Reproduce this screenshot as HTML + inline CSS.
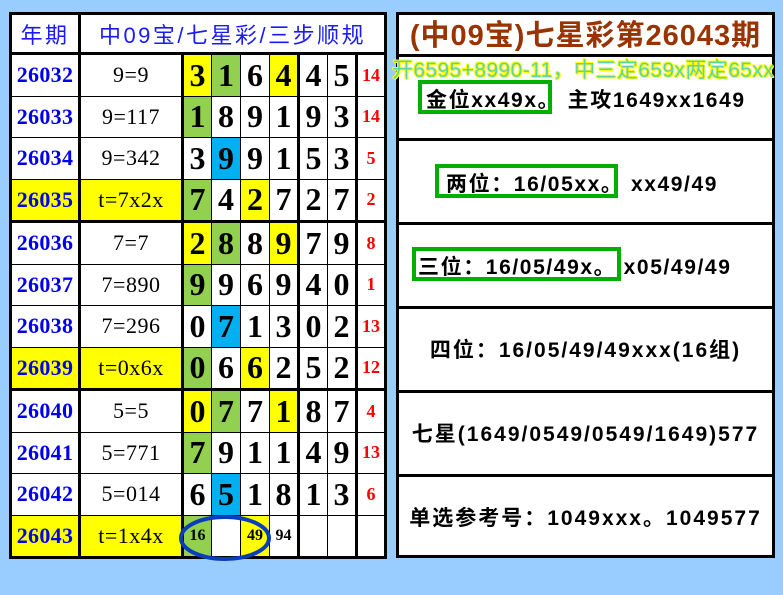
<!DOCTYPE html>
<html><head><meta charset="utf-8"><style>
body{margin:0;width:783px;height:595px;background:#99ccff;position:relative;overflow:hidden}
table{position:absolute;left:9px;top:12px;border-collapse:collapse;background:#fff;table-layout:fixed;width:376px}
td{border:1px solid #000;padding:0;height:40.5px;text-align:center;vertical-align:middle;font-family:"Liberation Serif","Noto Serif CJK SC",serif;overflow:hidden;white-space:nowrap}
.h td{height:37px;border:3px solid #000;font-family:"Liberation Sans","Noto Sans CJK SC",sans-serif;color:#1a1aff;font-size:22px;letter-spacing:2.5px}
td.p{color:#0000ee;font-weight:bold;font-size:22px;letter-spacing:0.3px;border-left:3px solid #000;border-right:3px solid #000}
td.f{font-size:22px;letter-spacing:0.5px}
td.d{font-weight:bold;font-size:32px}
td.r{color:#ff0000;font-weight:bold;font-size:18px;border-left:3px solid #000;border-right:3px solid #000}
td.t{border-left:3px solid #000}
tr.tk td{border-bottom:3px solid #000}
.Y{background:#ffff00}.G{background:#92d050}.B{background:#00b0f0}
#rp{position:absolute;left:396px;top:12px;width:373px;height:540px;border:3px solid #000;background:#fff}
.rb{position:absolute;left:0;width:373px;border-top:3px solid #000;font-family:"Liberation Sans","Noto Sans CJK SC",sans-serif;font-weight:bold;font-size:21px;letter-spacing:2px;color:#000;white-space:nowrap}
.gb{position:absolute;border:4px solid #00b000}
.tx{position:absolute;font-family:'Liberation Sans','Noto Sans CJK SC',sans-serif;font-weight:bold;font-size:21px;letter-spacing:1.6px;white-space:nowrap}
</style></head><body>
<table>
<colgroup><col style="width:69px"><col style="width:103px"><col style="width:29px"><col style="width:29px"><col style="width:29px"><col style="width:29px"><col style="width:29px"><col style="width:29px"><col style="width:29px"></colgroup>
<tr class="h"><td>年期</td><td colspan="8">中09宝/七星彩/三步顺规</td></tr>
<tr><td class="p">26032</td><td class="f">9=9</td><td class="d t Y">3</td><td class="d G">1</td><td class="d">6</td><td class="d Y">4</td><td class="d t">4</td><td class="d">5</td><td class="r">14</td></tr>
<tr><td class="p">26033</td><td class="f">9=117</td><td class="d t G">1</td><td class="d">8</td><td class="d">9</td><td class="d">1</td><td class="d t">9</td><td class="d">3</td><td class="r">14</td></tr>
<tr><td class="p">26034</td><td class="f">9=342</td><td class="d t">3</td><td class="d B">9</td><td class="d">9</td><td class="d">1</td><td class="d t">5</td><td class="d">3</td><td class="r">5</td></tr>
<tr class="tk"><td class="p Y">26035</td><td class="f Y">t=7x2x</td><td class="d t G">7</td><td class="d">4</td><td class="d Y">2</td><td class="d">7</td><td class="d t">2</td><td class="d">7</td><td class="r">2</td></tr>
<tr><td class="p">26036</td><td class="f">7=7</td><td class="d t Y">2</td><td class="d G">8</td><td class="d">8</td><td class="d Y">9</td><td class="d t">7</td><td class="d">9</td><td class="r">8</td></tr>
<tr><td class="p">26037</td><td class="f">7=890</td><td class="d t G">9</td><td class="d">9</td><td class="d">6</td><td class="d">9</td><td class="d t">4</td><td class="d">0</td><td class="r">1</td></tr>
<tr><td class="p">26038</td><td class="f">7=296</td><td class="d t">0</td><td class="d B">7</td><td class="d">1</td><td class="d">3</td><td class="d t">0</td><td class="d">2</td><td class="r">13</td></tr>
<tr class="tk"><td class="p Y">26039</td><td class="f Y">t=0x6x</td><td class="d t G">0</td><td class="d">6</td><td class="d Y">6</td><td class="d">2</td><td class="d t">5</td><td class="d">2</td><td class="r">12</td></tr>
<tr><td class="p">26040</td><td class="f">5=5</td><td class="d t Y">0</td><td class="d G">7</td><td class="d">7</td><td class="d Y">1</td><td class="d t">8</td><td class="d">7</td><td class="r">4</td></tr>
<tr><td class="p">26041</td><td class="f">5=771</td><td class="d t G">7</td><td class="d">9</td><td class="d">1</td><td class="d">1</td><td class="d t">4</td><td class="d">9</td><td class="r">13</td></tr>
<tr><td class="p">26042</td><td class="f">5=014</td><td class="d t">6</td><td class="d B">5</td><td class="d">1</td><td class="d">8</td><td class="d t">1</td><td class="d">3</td><td class="r">6</td></tr>
<tr class="tk"><td class="p Y">26043</td><td class="f Y">t=1x4x</td><td class="t G" style="font-weight:bold;font-size:16px">16</td><td></td><td class="Y" style="font-weight:bold;font-size:16px">49</td><td style="font-weight:bold;font-size:16px">94</td><td class="t"></td><td></td><td class="r"></td></tr>
</table>
<svg style="position:absolute;left:0;top:0" width="783" height="595"><ellipse cx="225" cy="538" rx="44" ry="21" fill="none" stroke="#0a3dbd" stroke-width="4"/></svg>
<div id="rp">
<div style="position:absolute;left:0;top:0;width:373px;height:39px;text-align:center;line-height:42px;font-family:'Liberation Sans','Noto Sans CJK SC',sans-serif;font-weight:bold;font-size:29px;letter-spacing:1px;color:#993300;white-space:nowrap">(中09宝)七星彩第26043期</div>
<div class="rb" style="top:39px;height:81px"></div>
<div class="rb" style="top:123px;height:81px"></div>
<div class="rb" style="top:207px;height:81px"></div>
<div class="rb" style="top:291px;height:81px;line-height:84px;text-align:center">四位：16/05/49/49xxx(16组)</div>
<div class="rb" style="top:375px;height:81px;line-height:84px;text-align:center">七星(1649/0549/0549/1649)577</div>
<div class="rb" style="top:459px;height:81px;line-height:84px;text-align:center">单选参考号：1049xxx。1049577</div>
</div>
<div class="gb" style="left:418px;top:80px;width:126px;height:26px"></div>
<div class="gb" style="left:435px;top:164px;width:175px;height:26px"></div>
<div class="gb" style="left:412px;top:247px;width:201px;height:26px"></div>
<div class="tx" style="left:426px;top:84px">金位xx49x。 主攻1649xx1649</div>
<div class="tx" style="left:446px;top:168px">两位：16/05xx。 xx49/49</div>
<div class="tx" style="left:418px;top:251px">三位：16/05/49x。 x05/49/49</div>
<div style="position:absolute;left:392px;top:54px;font-family:'Liberation Sans','Noto Sans CJK SC',sans-serif;font-size:21px;color:#5fd3a8;letter-spacing:0.4px;text-shadow:1px 0 0 #ffff00,-1px 0 0 #ffff00,0 1px 0 #ffff00,0 -1px 0 #ffff00,1px 1px 0 #ffff00,-1px -1px 0 #ffff00;white-space:nowrap">开6595+8990-11，中三定659x两定65xx</div>
</body></html>
